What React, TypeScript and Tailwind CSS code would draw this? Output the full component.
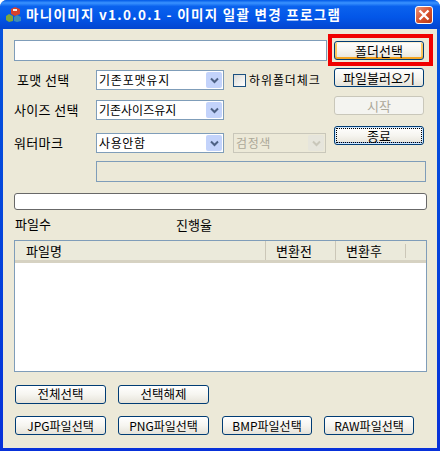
const FONT = "font-['Noto_Sans_CJK_KR','Liberation_Sans',sans-serif]";

function XpButton({ label, className = "", state = "normal" }: { label: string; className?: string; state?: "normal" | "hot" | "disabled" | "focus" }) {
  const base = "flex items-center justify-center rounded-[3px] border leading-none h-[19px] ";
  const look =
    state === "disabled"
      ? "border-[#c9c7ba] bg-[#f4f4f0] text-[#aca899]"
      : "border-[#003c74] text-black bg-gradient-to-b from-white via-[#f6f5f0] to-[#e6e3d9]";
  const ring =
    state === "hot"
      ? " shadow-[inset_0_1px_0_#fff0cf,inset_0_-2px_0_#f5a623,inset_2px_0_0_#fbc761,inset_-2px_0_0_#fbc761]"
      : state === "focus"
        ? " shadow-[inset_0_0_0_1px_#cee7ff,inset_0_-1px_0_1px_#89ade4] outline outline-1 outline-dotted outline-black outline-offset-[-3px]"
        : "";
  return <button className={base + look + ring + " " + className}>{label}</button>;
}

function Arrow({ disabled }: { disabled?: boolean }) {
  return (
    <span className={"flex h-[16px] w-[16px] items-center justify-center rounded-[2px] " + (disabled ? "bg-[#e6e5dc]" : "bg-[#c3d3fb]")}>
      <svg width="9" height="7" viewBox="0 0 9 7">
        <path d="M1 1.5 L4.5 5 L8 1.5" fill="none" stroke={disabled ? "#c9c7ba" : "#4d6185"} strokeWidth="2" />
      </svg>
    </span>
  );
}

function Combo({ value, valueClass = "" }: { value: string; valueClass?: string }) {
  return (
    <div className="flex h-[20px] w-[128px] items-center justify-between border border-[#7f9db9] bg-white pl-[2px] pr-[1px] text-[12px] text-black">
      <span className={valueClass}>{value}</span>
      <Arrow />
    </div>
  );
}

function FormRow({ label, value, labelClass = "", valueClass = "", className = "", children }: { label: string; value: string; labelClass?: string; valueClass?: string; className?: string; children?: any }) {
  return (
    <div className={"flex h-[20px] items-center " + className}>
      <span className={"w-[82px] whitespace-nowrap text-[13px] tracking-[0.35px] text-black " + labelClass}>{label}</span>
      <Combo value={value} valueClass={valueClass} />
      {children}
    </div>
  );
}

export default function App() {
  return (
    <div className={"relative flex h-[451px] w-[440px] flex-col overflow-hidden rounded-t-[7px] bg-gradient-to-b from-[#0855dd] to-[#0831d9] " + FONT}>
      {/* title bar */}
      <div className="flex h-[29px] shrink-0 items-center bg-[linear-gradient(to_bottom,#0058e6_0%,#3a93ff_10%,#0a62ee_22%,#0356e8_60%,#0345d0_100%)] pl-[5px] pr-[7px]">
        <svg width="17" height="17" viewBox="0 0 17 17" className="shrink-0">
          <path d="M6 3 L10 1 L15 3 L15 8 L10 10 L6 8 Z" fill="#d9412b" />
          <rect x="8" y="3" width="4" height="2" fill="#f4f0e6" />
          <path d="M1 10 L4 8 L8 10 L8 15 L4 16 L1 14 Z" fill="#7da63c" />
          <path d="M9 11 L12 9 L16 11 L16 15 L12 16 L9 15 Z" fill="#3f8db5" />
        </svg>
        <span className="ml-[4px] whitespace-nowrap text-[13.5px] font-bold tracking-[1.3px] text-white">
          마니이미지 v1.0.0.1 - 이미지 일괄 변경 프로그램
        </span>
        <span className="ml-auto flex h-[18px] w-[18px] items-center justify-center rounded-[3px] border border-white bg-gradient-to-br from-[#e9937a] via-[#d9532e] to-[#b93612]">
          <svg width="12" height="12" viewBox="0 0 12 12">
            <path d="M1.5 1.5 L10.5 10.5 M10.5 1.5 L1.5 10.5" stroke="white" strokeWidth="2.4" />
          </svg>
        </span>
      </div>

      {/* client area */}
      <div className="mx-[3px] mb-[3px] flex min-h-0 flex-1 flex-col bg-[#ece9d8] pl-[11px] pr-[10px]">
        <div className="flex">
          <div className="flex w-[313px] shrink-0 flex-col">
            <div className="mt-[11px] h-[21px] border border-[#7f9db9] bg-white" />
            <FormRow label="포맷 선택" value="기존포맷유지" labelClass="pl-[3px]" valueClass="tracking-[0.8px]" className="mt-[9px]">
              <span className="ml-[9px] h-[13px] w-[13px] shrink-0 border border-[#1c5180] bg-gradient-to-br from-[#dcdcd7] to-white" />
              <span className="ml-[3px] whitespace-nowrap text-[12px] tracking-[0.9px] text-black">하위폴더체크</span>
            </FormRow>
            <FormRow label="사이즈 선택" value="기존사이즈유지" className="mt-[10px]" />
            <FormRow label="워터마크" value="사용안함" valueClass="tracking-[0.6px]" className="mt-[13px]">
              <div className="ml-[9px] flex h-[20px] w-[93px] items-center justify-between border border-[#c9c7ba] bg-[#ece9d8] pl-[2px] pr-[1px] text-[12px] text-[#aca899]">
                <span className="tracking-[0.6px]">검정색</span>
                <Arrow disabled />
              </div>
            </FormRow>
          </div>
          <div className="ml-[7px] flex w-[90px] shrink-0 flex-col text-[13px]">
            <XpButton label="폴더선택" state="hot" className="mt-[12px]" />
            <XpButton label="파일불러오기" className="mt-[8px]" />
            <XpButton label="시작" state="disabled" className="mt-[9px]" />
            <XpButton label="종료" state="focus" className="mt-[11px]" />
          </div>
        </div>

        <div className="ml-[82px] mr-[1px] mt-[8px] h-[21px] shrink-0 border border-[#7f9db9]" />
        <div className="mt-[11px] h-[17px] shrink-0 rounded-[3px] border border-[#686868] bg-white" />

        <div className="mt-[6px] flex h-[16px] shrink-0 items-center text-[13px] text-black">
          <span className="ml-[1px] w-[161px]">파일수</span>
          <span className="mt-[2px]">진행율</span>
        </div>

        <div className="mt-[8px] h-[132px] shrink-0 border border-[#7f9db9] bg-white">
          <div className="flex h-[22px] items-center border-b-[3px] border-[#d6d2c2] bg-[#ebeadb] text-[13px] text-black">
            <span className="w-[250px] pl-[11px]">파일명</span>
            <span className="w-[70px] border-l border-[#cbc7b8] pl-[10px]">변환전</span>
            <span className="w-[70px] border-l border-[#cbc7b8] pl-[10px]">변환후</span>
            <span className="h-[14px] border-l border-[#cbc7b8]" />
          </div>
        </div>

        <div className="mt-[13px] flex shrink-0 gap-[12px] pl-[1px] text-[12.5px]">
          <XpButton label="전체선택" className="w-[91px]" />
          <XpButton label="선택해제" className="w-[91px]" />
        </div>
        <div className="mt-[12px] flex shrink-0 pl-[1px] text-[12px]">
          <XpButton label="JPG파일선택" className="w-[91px]" />
          <XpButton label="PNG파일선택" className="ml-[12px] w-[91px]" />
          <XpButton label="BMP파일선택" className="ml-[13px] w-[90px]" />
          <XpButton label="RAW파일선택" className="ml-[12px] w-[90px]" />
        </div>
      </div>

      {/* annotation box drawn over the screenshot */}
      <div className="absolute left-[328px] top-[34px] h-[32px] w-[105px] border-[4px] border-[#f00000]" />
    </div>
  );
}
